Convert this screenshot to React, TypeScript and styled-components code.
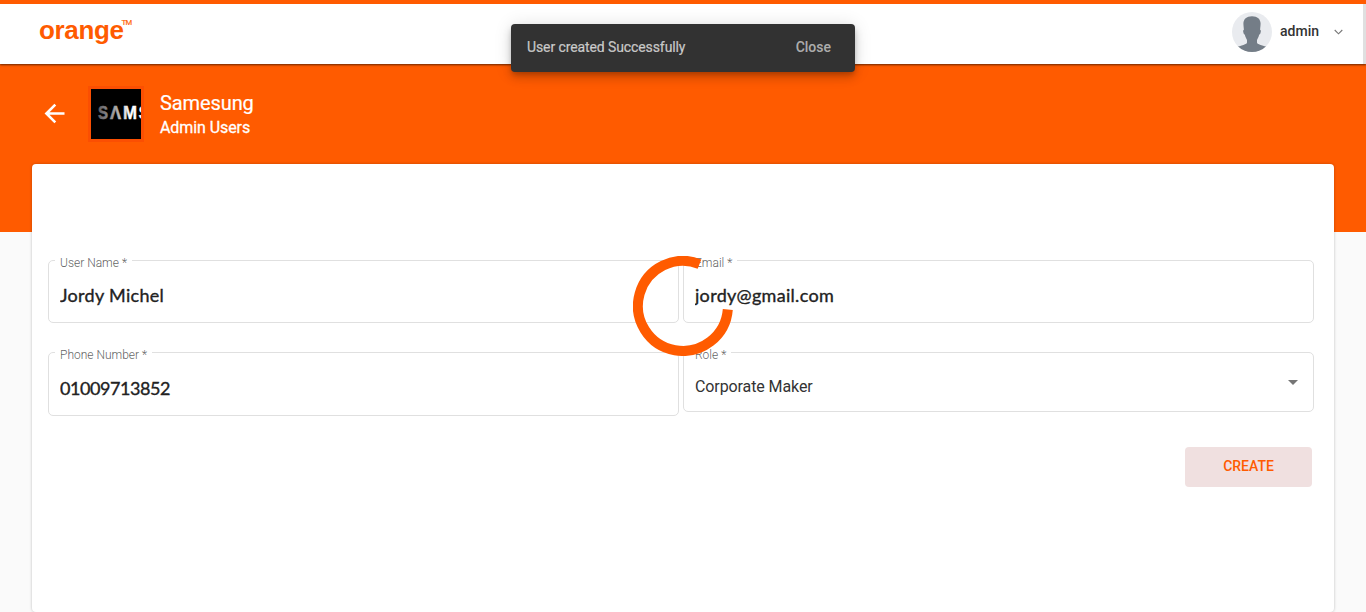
import React from "react";
import styled, { createGlobalStyle } from "styled-components";

const ORANGE = "#ff5b00";

const GlobalStyle = createGlobalStyle`
  * { box-sizing: border-box; }
  html, body { margin: 0; padding: 0; height: 100%; overflow: hidden; }
  body { background: #fafafa; font-family: Roboto, sans-serif; color: rgba(0, 0, 0, 0.87); }
  button, input { font: inherit; }
`;

const Page = styled.div`
  position: relative;
  height: 612px;
  overflow: hidden;
`;

const Header = styled.header`
  position: relative;
  z-index: 1;
  display: flex;
  justify-content: space-between;
  height: 64px;
  padding: 0 23px 0 39px;
  border-top: 4px solid ${ORANGE};
  background: #fff;
  box-shadow: 0 1px 2px rgba(0, 0, 0, 0.6);
`;

const Logo = styled.div`
  display: flex;
  align-items: flex-start;
  padding-top: 11px;
  color: ${ORANGE};
  font: 700 26px/30px "Liberation Sans", sans-serif;
  letter-spacing: -0.35px;
`;

const Trademark = styled.span`
  margin-left: -2px;
  padding-top: 3px;
  font: 400 8px/9px "Liberation Sans", sans-serif;
  letter-spacing: -1px;
  -webkit-text-stroke: 0.2px ${ORANGE};
`;

const UserMenu = styled.div`
  display: flex;
  align-items: center;
  height: 56px;
  font-size: 14px;
  font-weight: 500;
`;

const UserName = styled.span`
  margin: -2px 15px 0 8px;
  color: #333;
`;

const ScrollEdge = styled.div`
  position: absolute;
  top: 0;
  right: 0;
  width: 3px;
  height: 60px;
  background: #e0e0e0;
`;

const Banner = styled.section`
  display: flex;
  align-items: flex-start;
  height: 168px;
  padding: 22px 0 0 43px;
  background: ${ORANGE};
  color: #fff;
`;

const BackButton = styled.button`
  display: flex;
  margin: 15px 23px 0 0;
  padding: 0;
  border: 0;
  background: none;
`;

const CompanyLogo = styled.div`
  display: flex;
  width: 56px;
  height: 56px;
  border: 3px solid #fb4f02;
  background: #000;
`;

const Titles = styled.div`
  display: flex;
  flex-direction: column;
  margin: 5px 0 0 16px;
`;

const Company = styled.h1`
  margin: 0;
  font: 400 20px/24px Roboto, sans-serif;
  letter-spacing: -0.1px;
  -webkit-text-stroke: 0.2px #fff;
`;

const Subtitle = styled.h2`
  margin: 1px 0 0;
  font: 400 16px/24px Roboto, sans-serif;
  letter-spacing: -0.08px;
  -webkit-text-stroke: 0.3px #fff;
`;

const Card = styled.main`
  position: relative;
  height: 448px;
  margin: -68px 32px 0;
  padding: 96px 20px 0 16px;
  border-radius: 4px;
  background: #fff;
  box-shadow: 0 0 3px rgba(0, 0, 0, 0.25);
`;

const Form = styled.form`
  display: grid;
  grid-template-columns: 631px 631px;
  grid-template-rows: 63px 64px;
  gap: 29px 4px;
  align-items: start;
`;

const Field = styled.div<{ $height: number; $top: number }>`
  position: relative;
  display: flex;
  align-items: center;
  height: ${(p) => p.$height}px;
  padding: ${(p) => p.$top}px 15px 0 11px;
  border: 1px solid #e0e0e0;
  border-radius: 5px;
`;

const FieldLabel = styled.label`
  position: absolute;
  top: -6px;
  left: 6px;
  padding: 0 5px;
  background: #fff;
  color: rgba(0, 0, 0, 0.54);
  font-size: 12px;
  line-height: 16px;
  font-weight: 300;
  -webkit-text-stroke: 0.15px rgba(0, 0, 0, 0.54);
`;

const TextInput = styled.input<{ $spacing: number }>`
  width: 100%;
  padding: 0;
  border: 0;
  outline: 0;
  background: none;
  color: #222;
  font: 400 18px/24px Lato, sans-serif;
  letter-spacing: ${(p) => p.$spacing}px;
  -webkit-text-stroke: 0.35px #222;
`;

const SelectValue = styled.span`
  flex: 1;
  padding-top: 1px;
  color: #333;
  font-size: 16px;
  line-height: 20px;
  letter-spacing: -0.1px;
`;

const Actions = styled.div`
  display: flex;
  justify-content: flex-end;
  margin-top: 31px;
  padding-right: 2px;
`;

const CreateButton = styled.button`
  width: 127px;
  height: 40px;
  padding: 0 0 2px;
  border: 0;
  border-radius: 4px;
  background: #f0e0e0;
  color: ${ORANGE};
  font-size: 14px;
  font-weight: 500;
`;

const Spinner = styled.svg`
  position: absolute;
  z-index: 2;
  top: 256px;
  left: 633px;
`;

const Snackbar = styled.div`
  position: absolute;
  z-index: 3;
  top: 24px;
  left: 511px;
  display: flex;
  align-items: center;
  justify-content: space-between;
  width: 344px;
  height: 48px;
  padding: 0 24px 2px 16px;
  border-radius: 4px;
  background: #323232;
  color: rgba(255, 255, 255, 0.7);
  font-size: 14px;
  box-shadow: 0 3px 5px -1px rgba(0, 0, 0, 0.2), 0 6px 10px rgba(0, 0, 0, 0.14),
    0 1px 18px rgba(0, 0, 0, 0.12);
`;

const Message = styled.span`
  letter-spacing: -0.1px;
  -webkit-text-stroke: 0.2px rgba(255, 255, 255, 0.7);
`;

const CloseButton = styled.button`
  padding: 0;
  border: 0;
  background: none;
  color: rgba(255, 255, 255, 0.62);
  font-weight: 500;
`;

function Avatar() {
  return (
    <svg width="40" height="40" viewBox="0 0 40 40">
      <defs>
        <clipPath id="avatar-round">
          <circle cx="20" cy="20" r="20" />
        </clipPath>
      </defs>
      <g clipPath="url(#avatar-round)">
        <path fill="#e9ebef" d="M0 0h40v40H0z" />
        <path
          fill="#747d87"
          d="M20 4.2c-5.500 0-8.600 3-8.600 7.400 0 2.100.4 4.400.5 6.100-.9.3-.9 1.300-.5 2.700.3 1.300.8 2.100 1.400 2.200.5 2.300 1.400 4.100 2.200 5.300v2.600c0 1-1.100 1.600-3.600 2.400C9 33.700 7.100 34 5 35v6h30v-6c-2.100-1-4-1.300-6.400-2.100-2.500-.8-3.600-1.400-3.600-2.400v-2.600c.8-1.200 1.700-3 2.200-5.300.6-.1 1.100-.9 1.400-2.200.4-1.400.4-2.400-.5-2.700.1-1.700.5-4 .5-6.100 0-4.400-3.100-7.400-8.600-7.400z"
        />
      </g>
    </svg>
  );
}

function Wordmark() {
  return (
    <svg width="50" height="50" viewBox="0 0 50 50" fill="none">
      <defs>
        <linearGradient id="mark-shine" gradientUnits="userSpaceOnUse" x1="6" y1="0" x2="50" y2="0">
          <stop offset="0" stopColor="#5c5a60" />
          <stop offset="0.45" stopColor="#aaa" />
          <stop offset="0.75" stopColor="#fff" />
        </linearGradient>
      </defs>
      <text
        x="7"
        y="29.500"
        fill="url(#mark-shine)"
        stroke="url(#mark-shine)"
        strokeWidth="0.500"
        fontFamily="Liberation Sans, sans-serif"
        fontWeight="700"
        fontSize="19"
      >
        <tspan textLength="10" lengthAdjust="spacingAndGlyphs">S</tspan>
        <tspan x="19" textLength="11" lengthAdjust="spacingAndGlyphs">Λ</tspan>
        <tspan x="32" textLength="14" lengthAdjust="spacingAndGlyphs">M</tspan>
        <tspan x="47.500">S</tspan>
      </text>
    </svg>
  );
}

export default function App() {
  return (
    <Page>
      <GlobalStyle />
      <Header>
        <Logo>
          orange<Trademark>TM</Trademark>
        </Logo>
        <UserMenu>
          <Avatar />
          <UserName>admin</UserName>
          <svg width="9" height="6" viewBox="0 0 9 6" fill="none" stroke="#777" strokeWidth="1.100">
            <path d="M.7 1l3.800 3.800L8.300 1" />
          </svg>
        </UserMenu>
        <ScrollEdge />
      </Header>
      <Banner>
        <BackButton aria-label="Back">
          <svg width="22" height="24" viewBox="0 0 22 24" fill="none" stroke="#fff" strokeWidth="2.600">
            <path d="M21.500 12.500H3.500M12.300 3.600L3.400 12.500l8.900 8.900" />
          </svg>
        </BackButton>
        <CompanyLogo>
          <Wordmark />
        </CompanyLogo>
        <Titles>
          <Company>Samesung</Company>
          <Subtitle>Admin Users</Subtitle>
        </Titles>
      </Banner>
      <Card>
        <Form>
          <Field $height={63} $top={6}>
            <FieldLabel>User Name *</FieldLabel>
            <TextInput $spacing={0.3} defaultValue="Jordy Michel" />
          </Field>
          <Field $height={63} $top={6}>
            <FieldLabel>Email *</FieldLabel>
            <TextInput $spacing={0.3} defaultValue="jordy@gmail.com" />
          </Field>
          <Field $height={64} $top={8}>
            <FieldLabel>Phone Number *</FieldLabel>
            <TextInput $spacing={-0.43} defaultValue="01009713852" />
          </Field>
          <Field $height={60} $top={9}>
            <FieldLabel>Role *</FieldLabel>
            <SelectValue>Corporate Maker</SelectValue>
            <svg width="10" height="14" viewBox="0 0 10 14" fill="#757575">
              <path d="M0 0h10L5 5z" />
            </svg>
          </Field>
        </Form>
        <Actions>
          <CreateButton type="button">CREATE</CreateButton>
        </Actions>
      </Card>
      <Spinner width="100" height="100" viewBox="0 0 100 100" fill="none">
        <path d="M94.800 53.500A45 45 0 1 1 66.500 8.100" stroke={ORANGE} strokeWidth="10" />
      </Spinner>
      <Snackbar>
        <Message>User created Successfully</Message>
        <CloseButton>Close</CloseButton>
      </Snackbar>
    </Page>
  );
}
